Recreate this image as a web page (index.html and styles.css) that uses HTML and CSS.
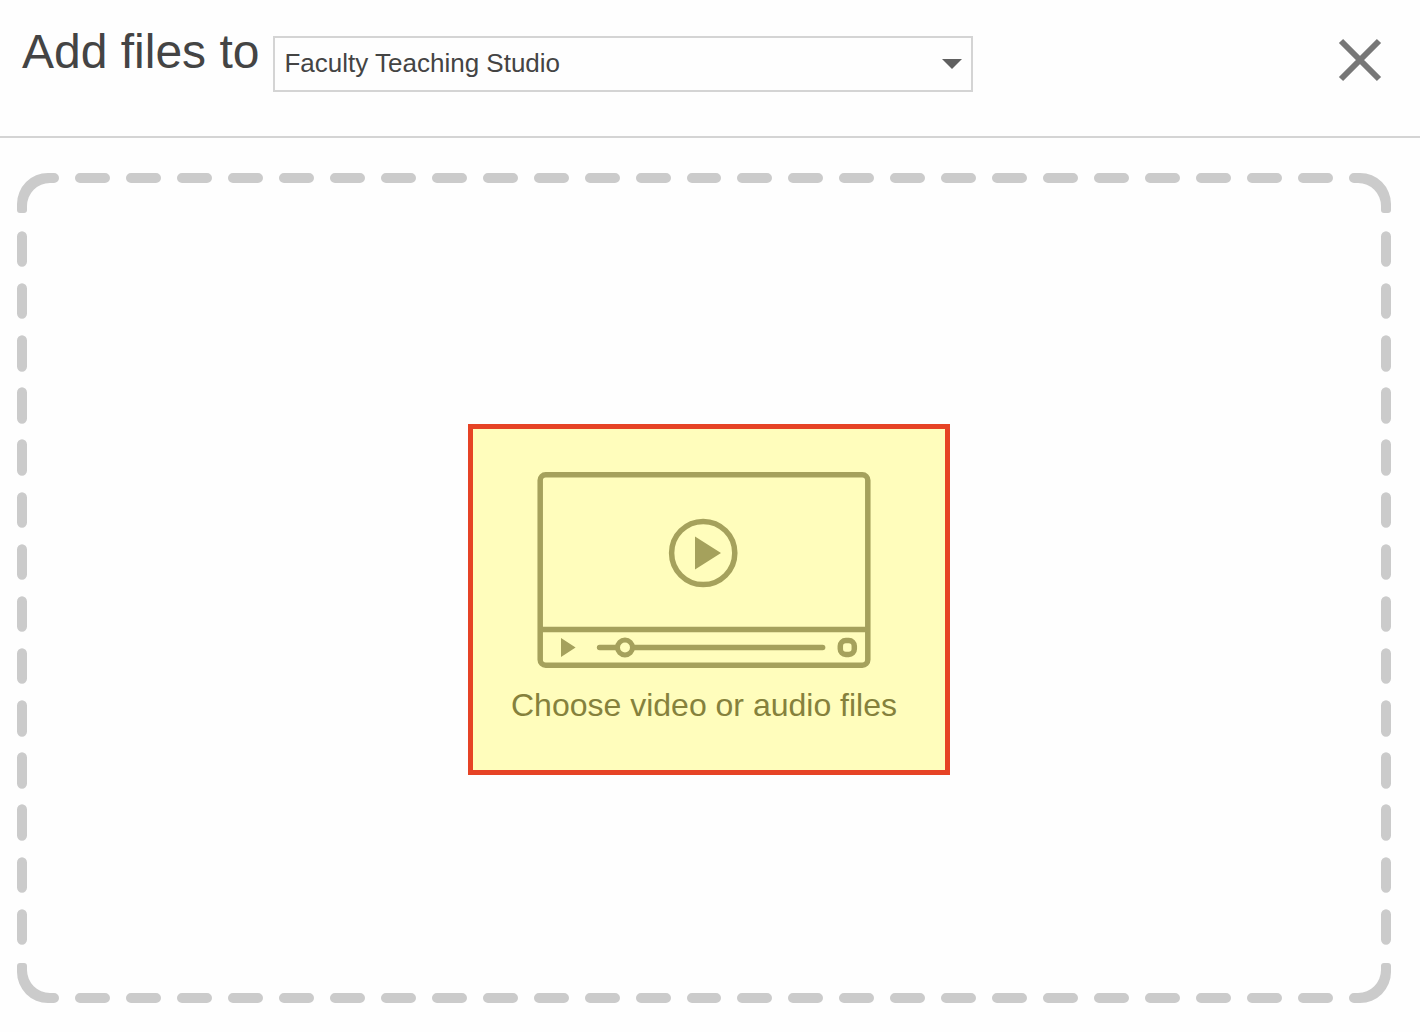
FILE: index.html
```
<!DOCTYPE html>
<html lang="en">
<head>
  <meta charset="utf-8">
  <meta name="viewport" content="width=device-width, initial-scale=1">
  <title>Add files</title>
  <link rel="stylesheet" href="styles.css">
</head>
<body>
  <header class="header">
    <h1 class="title"><label for="folder">Add files to</label></h1>
    <select class="folder" id="folder">
      <option selected>Faculty Teaching Studio</option>
    </select>
    <button class="close" type="button" aria-label="Close">
      <svg width="44" height="44" viewBox="0 0 44 44" aria-hidden="true">
        <path d="M3 3 41 41M41 3 3 41" fill="none" stroke="#777" stroke-width="6"/>
      </svg>
    </button>
  </header>
  <main class="dropzone">
    <button class="choose" type="button">
      <svg class="player" width="334" height="196" viewBox="0 0 334 196" aria-hidden="true">
        <g class="line">
          <rect x="3.2" y="2.8" width="327.6" height="190.4" rx="5.5"/>
          <path d="M3 157.5H331"/>
          <circle cx="166.2" cy="81" r="31.6"/>
          <path d="M62.6 175.4H285.6" stroke-linecap="round"/>
          <circle class="knob" cx="88" cy="175.5" r="7.5"/>
          <rect x="303.3" y="168.5" width="14" height="14" rx="5.5"/>
        </g>
        <path class="solid" d="M158 64.5 184 81 158 97.5ZM24 166 38.6 175.5 24 185Z"/>
      </svg>
      <span>Choose video or audio files</span>
    </button>
  </main>
</body>
</html>
```

FILE: styles.css
```
* {
  box-sizing: border-box;
}

body {
  display: flex;
  flex-direction: column;
  min-height: 100vh;
  margin: 0;
  background: #fefefe;
  color: #444;
  font-family: "Liberation Sans", Arial, sans-serif;
}

.header {
  display: flex;
  align-items: flex-start;
  gap: 14px;
  min-height: 138px;
  padding: 24px 38px 44px 22px;
  border-bottom: 2px solid #d4d4d4;
}

.title {
  margin: 0;
  font-size: 48px;
  font-weight: normal;
  line-height: 56px;
  white-space: nowrap;
}

.folder {
  flex: 0 1 700px;
  min-width: 0;
  height: 56px;
  margin-top: 12px;
  padding: 0 40px 2px 9px;
  appearance: none;
  border: 2px solid #d4d4d4;
  border-radius: 0;
  background: #fefefe url("data:image/svg+xml,%3Csvg xmlns='http://www.w3.org/2000/svg' width='20' height='10'%3E%3Cpath d='M0 0H20L10 10Z' fill='%23606060'/%3E%3C/svg%3E") no-repeat right 9px center;
  color: inherit;
  font: 26px "Liberation Sans", Arial, sans-serif;
}

.close {
  display: flex;
  margin: 14px 0 0 auto;
  padding: 0;
  border: 0;
  background: none;
  cursor: pointer;
}

.dropzone {
  display: flex;
  flex: 1;
  align-items: center;
  justify-content: center;
  margin: 35px 29px 29px 17px;
  padding: 23px 0 0 10px;
  border: 50px solid transparent;
  border-image: url("data:image/svg+xml,%3Csvg xmlns='http://www.w3.org/2000/svg' width='151' height='151' viewBox='0 0 151 151'%3E%3Cg fill='%23cbcbcb'%3E%3Cpath id='c' d='M0 31A31 31 0 0 1 31 0H37A5 5 0 0 1 37 10H33A23 23 0 0 0 10 33V37A3 3 0 0 1 7 40H3A3 3 0 0 1 0 37Z'/%3E%3Cuse href='%23c' transform='matrix(-1 0 0 1 151 0)'/%3E%3Cuse href='%23c' transform='matrix(1 0 0 -1 0 151)'/%3E%3Cuse href='%23c' transform='matrix(-1 0 0 -1 151 151)'/%3E%3C/g%3E%3Cpath d='M63 5H88M63 146H88M5 63V88M146 63V88' fill='none' stroke='%23cbcbcb' stroke-width='10' stroke-linecap='round'/%3E%3C/svg%3E") 50 / 50px round;
}

.choose {
  display: flex;
  flex-direction: column;
  align-items: center;
  gap: 17px;
  padding: 43px 48px 45px 38px;
  border: 5px solid #e64325;
  background: #fffdbc;
  color: #85813c;
  font: 32px/40px "Liberation Sans", Arial, sans-serif;
  white-space: nowrap;
  cursor: pointer;
}

.line {
  fill: none;
  stroke: #a5a15c;
  stroke-width: 5.5;
}

.knob {
  fill: #fffdbc;
  stroke-width: 5;
}

.solid {
  fill: #a5a15c;
}
```
